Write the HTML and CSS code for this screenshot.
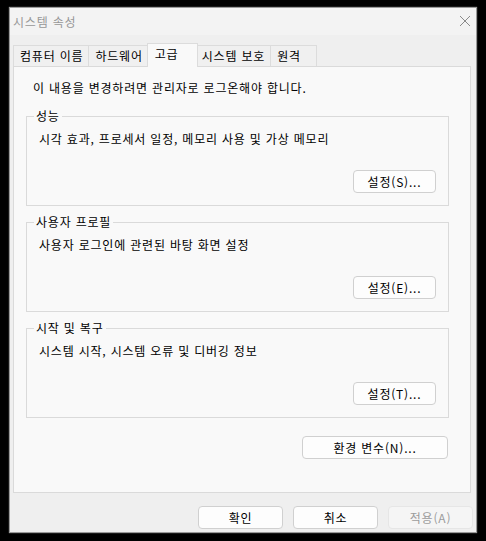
FILE: index.html
```html
<!DOCTYPE html>
<html lang="ko">
<head>
<meta charset="utf-8">
<title>시스템 속성</title>
<link rel="stylesheet" href="styles.css">
</head>
<body>
<div class="window">
  <div class="titlebar">
    <span class="title">시스템 속성</span>
    <svg class="close" width="12" height="12" viewBox="0 0 12 12" aria-hidden="true">
      <path d="M1 1 L11 11 M11 1 L1 11" stroke="#8a8a8a" stroke-width="1" fill="none"/>
    </svg>
  </div>
  <div class="tabs">
    <div class="tab">컴퓨터 이름</div>
    <div class="tab">하드웨어</div>
    <div class="tab active">고급</div>
    <div class="tab">시스템 보호</div>
    <div class="tab">원격</div>
  </div>
  <div class="panel">
    <p class="notice">이 내용을 변경하려면 관리자로 로그온해야 합니다.</p>
    <fieldset class="group">
      <legend>성능</legend>
      <p class="desc">시각 효과, 프로세서 일정, 메모리 사용 및 가상 메모리</p>
      <div class="group-actions"><button class="btn">설정(S)...</button></div>
    </fieldset>
    <fieldset class="group">
      <legend>사용자 프로필</legend>
      <p class="desc">사용자 로그인에 관련된 바탕 화면 설정</p>
      <div class="group-actions"><button class="btn">설정(E)...</button></div>
    </fieldset>
    <fieldset class="group">
      <legend>시작 및 복구</legend>
      <p class="desc">시스템 시작, 시스템 오류 및 디버깅 정보</p>
      <div class="group-actions"><button class="btn">설정(T)...</button></div>
    </fieldset>
    <div class="env-row"><button class="btn env">환경 변수(N)...</button></div>
  </div>
  <div class="footer">
    <button class="btn dlg">확인</button>
    <button class="btn dlg">취소</button>
    <button class="btn dlg" disabled>적용(A)</button>
  </div>
</div>
</body>
</html>
```

FILE: styles.css
```css
* { box-sizing: border-box; }

html, body {
  margin: 0;
  padding: 0;
  background: #000;
}

body {
  font-family: "Noto Sans CJK KR", "Noto Sans", sans-serif;
  font-size: 12px;
  line-height: 16px;
  letter-spacing: 0.8px;
  color: #000;
  padding: 8px 10px;
}

.window {
  width: 466px;
  height: 524px;
  background: #efefef;
  display: flex;
  flex-direction: column;
  box-shadow: 0 0 1px 1px #9a9a9a;
}

.titlebar {
  height: 27px;
  flex: none;
  background: #f3f3f3;
  display: flex;
  align-items: center;
  justify-content: space-between;
  padding: 0 5px 0 3px;
}

.title {
  color: #979797;
  font-size: 12px;
}

.close {
  display: block;
  margin-bottom: 2px;
}

.tabs {
  height: 31px;
  flex: none;
  display: flex;
  align-items: flex-end;
  padding-left: 3px;
}

.tab {
  height: 21px;
  min-width: 46px;
  padding: 2px 5px 0 6px;
  border: 1px solid #dcdcdc;
  border-bottom: none;
  border-left-width: 0;
  background: #f0f0f0;
  white-space: nowrap;
}

.tab:first-child { border-left-width: 1px; }

.tab.active {
  height: 24px;
  min-width: 51px;
  margin: 0 -2px -1px -2px;
  padding: 2px 8px 0 7px;
  border-left-width: 1px;
  background: #f9f9f9;
  position: relative;
  z-index: 1;
}

.tab.active + .tab { border-left-width: 0; }

.panel {
  flex: 1;
  margin: 0 5px 0 3px;
  background: #f9f9f9;
  border: 1px solid #dadada;
  padding: 13px 21px 0 12px;
  display: flex;
  flex-direction: column;
}

.notice {
  margin: 0 0 12px 7px;
}

.group {
  margin: 0 0 8px 0;
  padding: 7px 12px 12px 7px;
  border: 1px solid #dadada;
  min-width: 0;
}

.group legend {
  padding: 0 2px;
  line-height: 16px;
}

.desc {
  margin: 0 0 0 5px;
}

.group-actions {
  display: flex;
  justify-content: flex-end;
  margin-top: 23px;
}

.btn {
  font-family: inherit;
  font-size: 12px;
  line-height: 16px;
  letter-spacing: 0.8px;
  color: #000;
  background: #fdfdfd;
  border: 1px solid #d0d0d0;
  border-radius: 4px;
  height: 23px;
  padding: 0;
  width: 83px;
}

.btn:disabled {
  background: #f5f5f5;
  border-color: #e6e6e6;
  color: #9c9c9c;
}

.env-row {
  display: flex;
  justify-content: flex-end;
  margin-top: 10px;
  padding-right: 1px;
}

.btn.env { width: 146px; }

.footer {
  height: 39px;
  flex: none;
  display: flex;
  justify-content: flex-end;
  align-items: flex-start;
  gap: 10px;
  padding: 13px 3px 0 0;
}

.btn.dlg { width: 85px; }
```
